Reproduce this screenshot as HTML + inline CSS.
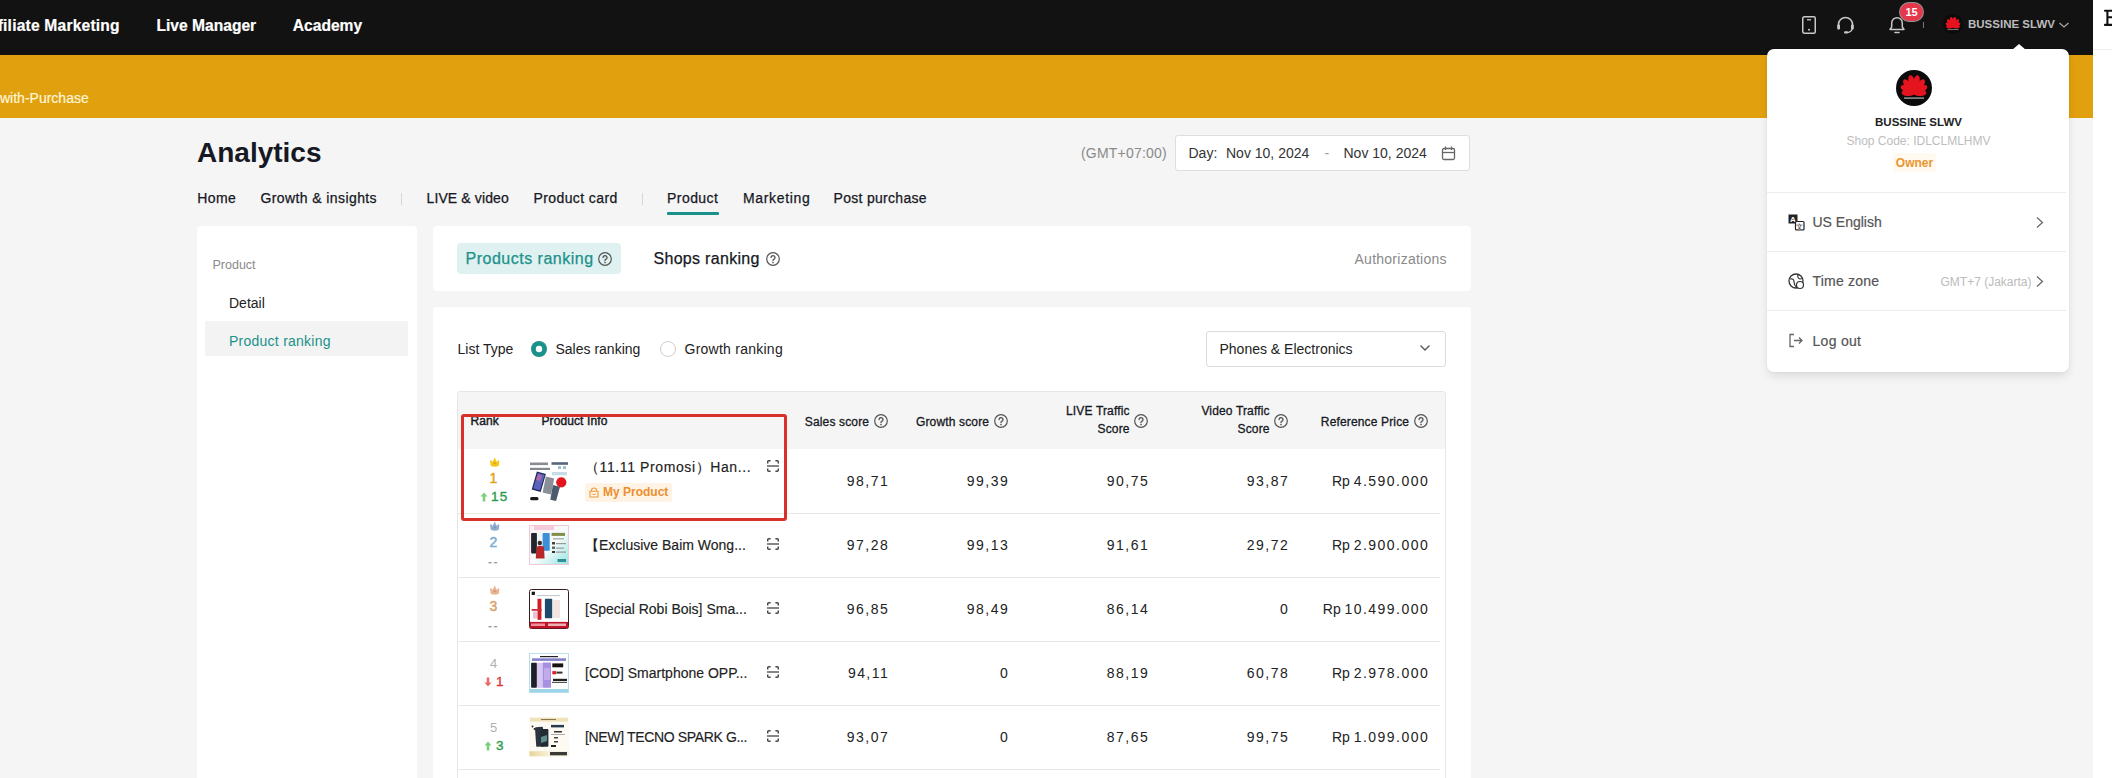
<!DOCTYPE html>
<html><head><meta charset="utf-8"><title>Analytics</title>
<style>
html,body{margin:0;padding:0;}
body{width:2112px;height:778px;overflow:hidden;position:relative;background:#f5f5f5;font-family:"Liberation Sans", sans-serif;}
</style></head><body>
<div style="position:absolute;left:0px;top:0px;width:2093px;height:55px;background:#121212;"></div>
<div style="position:absolute;left:0px;top:55px;width:2093px;height:63px;background:#e1a00e;"></div>
<div style="position:absolute;left:2093px;top:0px;width:19px;height:778px;background:#ffffff;"></div>
<div style="position:absolute;left:2093px;top:49px;width:19px;height:1px;background:#eeeeee;"></div>
<svg style="position:absolute;left:2103px;top:8px;" width="9" height="20" viewBox="0 0 9 20"><path d="M2 2.8 H9 M2 16.9 H9 M4.4 2.8 V16.9 M4.4 9.3 H9" fill="none" stroke="#111" stroke-width="2.1" stroke-linecap="round"/></svg>
<div style="position:absolute;top:17.79px;font-size:15.6px;line-height:15.6px;color:#fff;font-weight:700;white-space:nowrap;font-family:'Liberation Sans', sans-serif;right:1992.40px;letter-spacing:0.2px;margin-right:-0.2px;-webkit-text-stroke:0.2px currentColor;">Affiliate Marketing</div>
<div style="position:absolute;top:17.79px;font-size:15.6px;line-height:15.6px;color:#fff;font-weight:700;white-space:nowrap;font-family:'Liberation Sans', sans-serif;left:156.50px;-webkit-text-stroke:0.2px currentColor;">Live Manager</div>
<div style="position:absolute;top:17.79px;font-size:15.6px;line-height:15.6px;color:#fff;font-weight:700;white-space:nowrap;font-family:'Liberation Sans', sans-serif;left:292.80px;-webkit-text-stroke:0.2px currentColor;">Academy</div>
<div style="position:absolute;top:91.15px;font-size:14px;line-height:14px;color:#fff6d8;font-weight:400;white-space:nowrap;font-family:'Liberation Sans', sans-serif;left:0.00px;-webkit-text-stroke:0.2px currentColor;">with-Purchase</div>
<svg style="position:absolute;left:1801px;top:15px;" width="16" height="20" viewBox="0 0 16 20"><rect x="1.75" y="1.75" width="12.5" height="16.5" rx="1.5" fill="none" stroke="#c8c8c8" stroke-width="1.5"/><line x1="6" y1="4.8" x2="10" y2="4.8" stroke="#c8c8c8" stroke-width="1.3"/><circle cx="8" cy="14.8" r="1" fill="#c8c8c8"/></svg>
<svg style="position:absolute;left:1836px;top:15px;" width="19" height="20" viewBox="0 0 19 20"><path d="M2.5 11 V9.5 A7 7 0 0 1 16.5 9.5 V11" fill="none" stroke="#c8c8c8" stroke-width="1.6"/><rect x="1.2" y="9.5" width="2.8" height="5" rx="1" fill="#c8c8c8"/><rect x="15" y="9.5" width="2.8" height="5" rx="1" fill="#c8c8c8"/><path d="M16 14 Q15.5 17.5 10 17.5" fill="none" stroke="#c8c8c8" stroke-width="1.5"/><rect x="8" y="16.3" width="4" height="2.3" rx="1" fill="#c8c8c8"/></svg>
<svg style="position:absolute;left:1888px;top:15px;" width="18" height="20" viewBox="0 0 18 20"><path d="M2 14.5 H16 L14.3 12 V8 A5.3 5.3 0 0 0 3.7 8 V12 Z" fill="none" stroke="#c8c8c8" stroke-width="1.5" stroke-linejoin="round"/><path d="M7 17.5 H11" stroke="#c8c8c8" stroke-width="1.6" stroke-linecap="round"/></svg>
<div style="position:absolute;left:1900px;top:3px;width:23px;height:18px;background:#e5384c;border-radius:9px;box-shadow:0 0 0 1px rgba(255,255,255,0.55);"></div>
<div style="position:absolute;top:7.19px;font-size:11px;line-height:11px;color:#fff;font-weight:700;white-space:nowrap;font-family:'Liberation Sans', sans-serif;left:1911.50px;transform:translateX(-50%);">15</div>
<div style="position:absolute;left:1923px;top:22px;width:1px;height:6px;background:#777;"></div>
<svg style="position:absolute;left:1942.5px;top:14.3px;" width="20" height="20" viewBox="0 0 20 20"><g transform="scale(0.5555555555555556)"><circle cx="18" cy="18" r="18" fill="#0b0b0b"/><path d="M0 0 C -4.3 -6.824999999999999 -4.085 -19.5 0 -19.5 C 4.085 -19.5 4.3 -6.824999999999999 0 0 Z" fill="#e5141e" transform="translate(18 24.5) rotate(-11)"/><path d="M0 0 C -4.3 -6.824999999999999 -4.085 -19.5 0 -19.5 C 4.085 -19.5 4.3 -6.824999999999999 0 0 Z" fill="#e5141e" transform="translate(18 24.5) rotate(11)"/><path d="M0 0 C -4.3 -6.3 -4.085 -18 0 -18 C 4.085 -18 4.3 -6.3 0 0 Z" fill="#e5141e" transform="translate(18 24.5) rotate(-34)"/><path d="M0 0 C -4.3 -6.3 -4.085 -18 0 -18 C 4.085 -18 4.3 -6.3 0 0 Z" fill="#e5141e" transform="translate(18 24.5) rotate(34)"/><path d="M0 0 C -4.0 -5.425 -3.8 -15.5 0 -15.5 C 3.8 -15.5 4.0 -5.425 0 0 Z" fill="#e5141e" transform="translate(18 24.5) rotate(-57)"/><path d="M0 0 C -4.0 -5.425 -3.8 -15.5 0 -15.5 C 3.8 -15.5 4.0 -5.425 0 0 Z" fill="#e5141e" transform="translate(18 24.5) rotate(57)"/><path d="M0 0 C -3.6 -4.375 -3.42 -12.5 0 -12.5 C 3.42 -12.5 3.6 -4.375 0 0 Z" fill="#e5141e" transform="translate(18 24.5) rotate(-81)"/><path d="M0 0 C -3.6 -4.375 -3.42 -12.5 0 -12.5 C 3.42 -12.5 3.6 -4.375 0 0 Z" fill="#e5141e" transform="translate(18 24.5) rotate(81)"/><rect x="8" y="27.3" width="20" height="1.6" fill="#8a8a8a"/></g></svg>
<div style="position:absolute;top:19.27px;font-size:11.5px;line-height:11.5px;color:#bdbdbd;font-weight:700;white-space:nowrap;font-family:'Liberation Sans', sans-serif;left:1968.00px;">BUSSINE SLWV</div>
<svg style="position:absolute;left:2058px;top:21px;" width="12" height="8" viewBox="0 0 12 8"><path d="M1.5 2 L6 6 L10.5 2" fill="none" stroke="#aaa" stroke-width="1.2"/></svg>
<div style="position:absolute;top:138.60px;font-size:28px;line-height:28px;color:#161823;font-weight:700;white-space:nowrap;font-family:'Liberation Sans', sans-serif;left:197.00px;">Analytics</div>
<div style="position:absolute;top:146.15px;font-size:14px;line-height:14px;color:#8a8a8a;font-weight:400;white-space:nowrap;font-family:'Liberation Sans', sans-serif;left:1081.00px;letter-spacing:0.2px;">(GMT+07:00)</div>
<div style="position:absolute;left:1175px;top:135px;width:295px;height:36px;background:#fff;border:1px solid #dedede;border-radius:3px;box-sizing:border-box;"></div>
<div style="position:absolute;top:146.15px;font-size:14px;line-height:14px;color:#333;font-weight:400;white-space:nowrap;font-family:'Liberation Sans', sans-serif;left:1188.50px;">Day:</div>
<div style="position:absolute;top:146.15px;font-size:14px;line-height:14px;color:#333;font-weight:400;white-space:nowrap;font-family:'Liberation Sans', sans-serif;left:1226.00px;">Nov 10, 2024</div>
<div style="position:absolute;top:146.15px;font-size:14px;line-height:14px;color:#999;font-weight:400;white-space:nowrap;font-family:'Liberation Sans', sans-serif;left:1324.50px;">-</div>
<div style="position:absolute;top:146.15px;font-size:14px;line-height:14px;color:#333;font-weight:400;white-space:nowrap;font-family:'Liberation Sans', sans-serif;left:1343.50px;">Nov 10, 2024</div>
<svg style="position:absolute;left:1441px;top:146px;" width="16" height="15" viewBox="0 0 16 15"><rect x="1.5" y="2.5" width="12" height="11" rx="1.5" fill="none" stroke="#666" stroke-width="1.3"/><line x1="1.5" y1="6.5" x2="13.5" y2="6.5" stroke="#666" stroke-width="1.3"/><line x1="4.5" y1="0.5" x2="4.5" y2="4" stroke="#666" stroke-width="1.3"/><line x1="10.5" y1="0.5" x2="10.5" y2="4" stroke="#666" stroke-width="1.3"/></svg>
<div style="position:absolute;top:191.25px;font-size:14px;line-height:14px;color:#161823;font-weight:400;white-space:nowrap;font-family:'Liberation Sans', sans-serif;left:197.30px;-webkit-text-stroke:0.25px currentColor;letter-spacing:0.4px;">Home</div>
<div style="position:absolute;top:191.25px;font-size:14px;line-height:14px;color:#161823;font-weight:400;white-space:nowrap;font-family:'Liberation Sans', sans-serif;left:260.50px;-webkit-text-stroke:0.25px currentColor;letter-spacing:0.4px;">Growth &amp; insights</div>
<div style="position:absolute;top:191.25px;font-size:14px;line-height:14px;color:#161823;font-weight:400;white-space:nowrap;font-family:'Liberation Sans', sans-serif;left:426.50px;-webkit-text-stroke:0.25px currentColor;letter-spacing:0.12px;">LIVE &amp; video</div>
<div style="position:absolute;top:191.25px;font-size:14px;line-height:14px;color:#161823;font-weight:400;white-space:nowrap;font-family:'Liberation Sans', sans-serif;left:533.50px;-webkit-text-stroke:0.25px currentColor;letter-spacing:0.4px;">Product card</div>
<div style="position:absolute;top:191.25px;font-size:14px;line-height:14px;color:#161823;font-weight:400;white-space:nowrap;font-family:'Liberation Sans', sans-serif;left:667.00px;-webkit-text-stroke:0.25px currentColor;letter-spacing:0.45px;">Product</div>
<div style="position:absolute;top:191.25px;font-size:14px;line-height:14px;color:#161823;font-weight:400;white-space:nowrap;font-family:'Liberation Sans', sans-serif;left:743.00px;-webkit-text-stroke:0.25px currentColor;letter-spacing:0.65px;">Marketing</div>
<div style="position:absolute;top:191.25px;font-size:14px;line-height:14px;color:#161823;font-weight:400;white-space:nowrap;font-family:'Liberation Sans', sans-serif;left:833.50px;-webkit-text-stroke:0.25px currentColor;letter-spacing:0.3px;">Post purchase</div>
<div style="position:absolute;left:401px;top:193px;width:1px;height:12px;background:#d6d6d6;"></div>
<div style="position:absolute;left:642px;top:193px;width:1px;height:12px;background:#d6d6d6;"></div>
<div style="position:absolute;left:667px;top:212px;width:52px;height:3px;background:#1b918b;border-radius:1px;"></div>
<div style="position:absolute;left:197px;top:226px;width:220px;height:552px;background:#fff;border-radius:4px 4px 0 0;"></div>
<div style="position:absolute;top:259.42px;font-size:12.5px;line-height:12.5px;color:#8a8a8a;font-weight:400;white-space:nowrap;font-family:'Liberation Sans', sans-serif;left:212.50px;">Product</div>
<div style="position:absolute;top:295.85px;font-size:14px;line-height:14px;color:#222;font-weight:400;white-space:nowrap;font-family:'Liberation Sans', sans-serif;left:229.00px;">Detail</div>
<div style="position:absolute;left:205px;top:321px;width:203px;height:35px;background:#f3f3f3;border-radius:2px;"></div>
<div style="position:absolute;top:333.85px;font-size:14px;line-height:14px;color:#1b918b;font-weight:400;white-space:nowrap;font-family:'Liberation Sans', sans-serif;left:229.00px;letter-spacing:0.25px;">Product ranking</div>
<div style="position:absolute;left:433px;top:226px;width:1038px;height:65px;background:#fff;border-radius:4px;"></div>
<div style="position:absolute;left:457px;top:243px;width:164px;height:31px;background:#dff1f0;border-radius:4px;"></div>
<div style="position:absolute;top:251.46px;font-size:16px;line-height:16px;color:#1b918b;font-weight:400;white-space:nowrap;font-family:'Liberation Sans', sans-serif;left:465.50px;-webkit-text-stroke:0.25px currentColor;letter-spacing:0.5px;">Products ranking</div>
<svg style="position:absolute;left:598px;top:252px;" width="14" height="14" viewBox="0 0 14 14"><circle cx="7" cy="7" r="6.3" fill="none" stroke="#555" stroke-width="1.2"/><path d="M5.1 5.6 A1.95 1.95 0 1 1 8.1 7.2 Q7 7.7 7 8.6" fill="none" stroke="#555" stroke-width="1.35" stroke-linecap="round"/><circle cx="7" cy="10.5" r="0.85" fill="#555"/></svg>
<div style="position:absolute;top:251.46px;font-size:16px;line-height:16px;color:#161823;font-weight:400;white-space:nowrap;font-family:'Liberation Sans', sans-serif;left:653.50px;-webkit-text-stroke:0.25px currentColor;letter-spacing:0.3px;">Shops ranking</div>
<svg style="position:absolute;left:766px;top:252px;" width="14" height="14" viewBox="0 0 14 14"><circle cx="7" cy="7" r="6.3" fill="none" stroke="#555" stroke-width="1.2"/><path d="M5.1 5.6 A1.95 1.95 0 1 1 8.1 7.2 Q7 7.7 7 8.6" fill="none" stroke="#555" stroke-width="1.35" stroke-linecap="round"/><circle cx="7" cy="10.5" r="0.85" fill="#555"/></svg>
<div style="position:absolute;top:252.15px;font-size:14px;line-height:14px;color:#8a8a8a;font-weight:400;white-space:nowrap;font-family:'Liberation Sans', sans-serif;right:665.50px;letter-spacing:0.25px;margin-right:-0.25px;">Authorizations</div>
<div style="position:absolute;left:433px;top:307px;width:1038px;height:471px;background:#fff;border-radius:4px 4px 0 0;"></div>
<div style="position:absolute;top:342.15px;font-size:14px;line-height:14px;color:#222;font-weight:400;white-space:nowrap;font-family:'Liberation Sans', sans-serif;left:457.50px;">List Type</div>
<svg style="position:absolute;left:531px;top:341px;" width="16" height="16" viewBox="0 0 16 16"><circle cx="8" cy="8" r="8" fill="#1b918b"/><circle cx="8" cy="8" r="3.2" fill="#fff"/></svg>
<div style="position:absolute;top:342.15px;font-size:14px;line-height:14px;color:#222;font-weight:400;white-space:nowrap;font-family:'Liberation Sans', sans-serif;left:555.50px;">Sales ranking</div>
<svg style="position:absolute;left:660px;top:341px;" width="16" height="16" viewBox="0 0 16 16"><circle cx="8" cy="8" r="7.5" fill="#fff" stroke="#cfcfcf" stroke-width="1"/></svg>
<div style="position:absolute;top:342.15px;font-size:14px;line-height:14px;color:#222;font-weight:400;white-space:nowrap;font-family:'Liberation Sans', sans-serif;left:684.50px;letter-spacing:0.25px;">Growth ranking</div>
<div style="position:absolute;left:1206px;top:331px;width:240px;height:36px;background:#fff;border:1px solid #dcdcdc;border-radius:3px;box-sizing:border-box;"></div>
<div style="position:absolute;top:341.85px;font-size:14px;line-height:14px;color:#222;font-weight:400;white-space:nowrap;font-family:'Liberation Sans', sans-serif;left:1219.50px;">Phones &amp; Electronics</div>
<svg style="position:absolute;left:1419px;top:344px;" width="12" height="8" viewBox="0 0 12 8"><path d="M1.5 1.5 L6 6 L10.5 1.5" fill="none" stroke="#555" stroke-width="1.3"/></svg>
<div style="position:absolute;left:457px;top:391px;width:989px;height:387px;border:1px solid #e6e6e6;border-bottom:none;border-radius:4px 4px 0 0;box-sizing:border-box;"></div>
<div style="position:absolute;left:458px;top:392px;width:987px;height:57px;background:#f5f5f5;border-radius:3px 3px 0 0;"></div>
<div style="position:absolute;top:414.64px;font-size:12px;line-height:12px;color:#161823;font-weight:400;white-space:nowrap;font-family:'Liberation Sans', sans-serif;left:470.50px;-webkit-text-stroke:0.4px currentColor;letter-spacing:0.1px;">Rank</div>
<div style="position:absolute;top:414.64px;font-size:12px;line-height:12px;color:#161823;font-weight:400;white-space:nowrap;font-family:'Liberation Sans', sans-serif;left:541.50px;-webkit-text-stroke:0.4px currentColor;letter-spacing:0.1px;">Product Info</div>
<div style="position:absolute;top:415.54px;font-size:12px;line-height:12px;color:#161823;font-weight:400;white-space:nowrap;font-family:'Liberation Sans', sans-serif;right:1243.00px;-webkit-text-stroke:0.3px currentColor;letter-spacing:0.15px;margin-right:-0.15px;">Sales score</div>
<svg style="position:absolute;left:874px;top:414px;" width="14" height="14" viewBox="0 0 14 14"><circle cx="7" cy="7" r="6.3" fill="none" stroke="#555" stroke-width="1.2"/><path d="M5.1 5.6 A1.95 1.95 0 1 1 8.1 7.2 Q7 7.7 7 8.6" fill="none" stroke="#555" stroke-width="1.35" stroke-linecap="round"/><circle cx="7" cy="10.5" r="0.85" fill="#555"/></svg>
<div style="position:absolute;top:415.54px;font-size:12px;line-height:12px;color:#161823;font-weight:400;white-space:nowrap;font-family:'Liberation Sans', sans-serif;right:1123.00px;-webkit-text-stroke:0.3px currentColor;letter-spacing:0.15px;margin-right:-0.15px;">Growth score</div>
<svg style="position:absolute;left:994px;top:414px;" width="14" height="14" viewBox="0 0 14 14"><circle cx="7" cy="7" r="6.3" fill="none" stroke="#555" stroke-width="1.2"/><path d="M5.1 5.6 A1.95 1.95 0 1 1 8.1 7.2 Q7 7.7 7 8.6" fill="none" stroke="#555" stroke-width="1.35" stroke-linecap="round"/><circle cx="7" cy="10.5" r="0.85" fill="#555"/></svg>
<div style="position:absolute;top:404.74px;font-size:12px;line-height:12px;color:#161823;font-weight:400;white-space:nowrap;font-family:'Liberation Sans', sans-serif;right:982.50px;-webkit-text-stroke:0.3px currentColor;letter-spacing:0.15px;margin-right:-0.15px;">LIVE Traffic</div>
<div style="position:absolute;top:422.74px;font-size:12px;line-height:12px;color:#161823;font-weight:400;white-space:nowrap;font-family:'Liberation Sans', sans-serif;right:982.50px;-webkit-text-stroke:0.3px currentColor;letter-spacing:0.15px;margin-right:-0.15px;">Score</div>
<svg style="position:absolute;left:1134px;top:414px;" width="14" height="14" viewBox="0 0 14 14"><circle cx="7" cy="7" r="6.3" fill="none" stroke="#555" stroke-width="1.2"/><path d="M5.1 5.6 A1.95 1.95 0 1 1 8.1 7.2 Q7 7.7 7 8.6" fill="none" stroke="#555" stroke-width="1.35" stroke-linecap="round"/><circle cx="7" cy="10.5" r="0.85" fill="#555"/></svg>
<div style="position:absolute;top:404.74px;font-size:12px;line-height:12px;color:#161823;font-weight:400;white-space:nowrap;font-family:'Liberation Sans', sans-serif;right:842.50px;-webkit-text-stroke:0.3px currentColor;letter-spacing:0.15px;margin-right:-0.15px;">Video Traffic</div>
<div style="position:absolute;top:422.74px;font-size:12px;line-height:12px;color:#161823;font-weight:400;white-space:nowrap;font-family:'Liberation Sans', sans-serif;right:842.50px;-webkit-text-stroke:0.3px currentColor;letter-spacing:0.15px;margin-right:-0.15px;">Score</div>
<svg style="position:absolute;left:1274px;top:414px;" width="14" height="14" viewBox="0 0 14 14"><circle cx="7" cy="7" r="6.3" fill="none" stroke="#555" stroke-width="1.2"/><path d="M5.1 5.6 A1.95 1.95 0 1 1 8.1 7.2 Q7 7.7 7 8.6" fill="none" stroke="#555" stroke-width="1.35" stroke-linecap="round"/><circle cx="7" cy="10.5" r="0.85" fill="#555"/></svg>
<div style="position:absolute;top:415.54px;font-size:12px;line-height:12px;color:#161823;font-weight:400;white-space:nowrap;font-family:'Liberation Sans', sans-serif;right:703.00px;-webkit-text-stroke:0.3px currentColor;letter-spacing:0.15px;margin-right:-0.15px;">Reference Price</div>
<svg style="position:absolute;left:1414px;top:414px;" width="14" height="14" viewBox="0 0 14 14"><circle cx="7" cy="7" r="6.3" fill="none" stroke="#555" stroke-width="1.2"/><path d="M5.1 5.6 A1.95 1.95 0 1 1 8.1 7.2 Q7 7.7 7 8.6" fill="none" stroke="#555" stroke-width="1.35" stroke-linecap="round"/><circle cx="7" cy="10.5" r="0.85" fill="#555"/></svg>
<div style="position:absolute;left:458px;top:513px;width:982px;height:1px;background:#e8e8e8;"></div>
<svg style="position:absolute;left:488.5px;top:457px;" width="12" height="11" viewBox="0 0 12 11"><g transform="scale(0.88)"><path d="M2 4.5 L4.3 6.8 L6.5 2.8 L8.7 6.8 L11 4.5 L10.3 9.6 Q6.5 11 2.7 9.6 Z" fill="#f5c518" stroke="#f5c518" stroke-width="1.6" stroke-linejoin="round"/><circle cx="6.5" cy="1.5" r="0.9" fill="#f5c518" opacity="0.7"/><circle cx="6.5" cy="7.3" r="1.3" fill="#000" opacity="0.15"/></g></svg>
<div style="position:absolute;top:470.65px;font-size:14px;line-height:14px;color:#e3a21a;font-weight:400;white-space:nowrap;font-family:'Liberation Sans', sans-serif;left:493.50px;transform:translateX(-50%);-webkit-text-stroke:0.45px currentColor;">1</div>
<svg style="position:absolute;left:479.5px;top:492.1px;" width="8" height="10" viewBox="0 0 8 10"><path d="M4 0.5 L7.5 4.5 H5.3 V9.5 H2.7 V4.5 H0.5 Z" fill="#7ccd7e"/></svg>
<div style="position:absolute;top:490.17px;font-size:13.5px;line-height:13.5px;color:#2a9a4a;font-weight:400;white-space:nowrap;font-family:'Liberation Sans', sans-serif;left:491.00px;letter-spacing:1.2px;-webkit-text-stroke:0.35px currentColor;">15</div>
<svg style="position:absolute;left:529px;top:461px;" width="40" height="40" viewBox="0 0 40 40"><rect width="40" height="40" fill="#ffffff"/><rect x="1" y="1.5" width="18" height="2.6" fill="#6b7078" opacity="0.8"/><rect x="1" y="6.8" width="20" height="2.2" fill="#5a6068" opacity="0.75"/><rect x="22.5" y="1.2" width="16.5" height="2.6" fill="#3d4a66" opacity="0.85"/><rect x="29" y="5.3" width="3" height="2.6" fill="#8fb8c8"/><rect x="34" y="5.3" width="3" height="2.6" fill="#8fb8c8"/><rect x="23" y="11" width="15" height="3.3" fill="#b8d4e0" opacity="0.8"/><polygon points="7.9,10.4 16.9,13 11.7,31 2.7,28.4" fill="#1c2a5a"/><polygon points="8.8,12 15.6,14 11,29.3 4.2,27.4" fill="#5b64b8"/><polygon points="9,13 13,14.5 11,20 7,19" fill="#c06aa8" opacity="0.8"/><polygon points="16.9,15.6 25.2,17.5 22,33.6 13.6,31.6" fill="#8a8e96"/><polygon points="23.9,23.9 31,25.8 27.1,40 21.3,38.7" fill="#4c5a6c"/><circle cx="32.3" cy="21.3" r="5.1" fill="#e3141c"/><rect x="1.1" y="36" width="8.4" height="3.3" rx="1.6" fill="#1a1a1a"/></svg>
<div style="position:absolute;top:460.35px;font-size:14px;line-height:14px;color:#222;font-weight:400;white-space:nowrap;font-family:'Liberation Sans', sans-serif;left:593.00px;letter-spacing:0.6px;margin-left:-8px;-webkit-text-stroke:0.15px currentColor;">（11.11 Promosi）Han...</div>
<div style="position:absolute;left:585px;top:483px;width:87px;height:19px;background:#fff3e6;border-radius:2px;"></div>
<svg style="position:absolute;left:588.5px;top:487px;" width="10" height="11" viewBox="0 0 10 11"><path d="M2.5 4 V3.5 A2.5 2.5 0 0 1 7.5 3.5 V4 M1 4.2 H9 V10 H1 Z" fill="none" stroke="#ee9a3a" stroke-width="1.1"/><path d="M3.5 7 Q5 8.5 6.5 7" fill="none" stroke="#ee9a3a" stroke-width="1"/></svg>
<div style="position:absolute;top:486.44px;font-size:12px;line-height:12px;color:#ec8f2c;font-weight:700;white-space:nowrap;font-family:'Liberation Sans', sans-serif;left:603.00px;">My Product</div>
<svg style="position:absolute;left:766px;top:459px;" width="14" height="14" viewBox="0 0 14 14"><path d="M1.7 4.6 V2.8 Q1.7 1.7 2.8 1.7 H4.6 M9.4 1.7 H11.2 Q12.3 1.7 12.3 2.8 V4.6 M12.3 9.4 V11.2 Q12.3 12.3 11.2 12.3 H9.4 M4.6 12.3 H2.8 Q1.7 12.3 1.7 11.2 V9.4" fill="none" stroke="#444" stroke-width="1.4"/><line x1="1" y1="7" x2="13" y2="7" stroke="#444" stroke-width="1.3"/></svg>
<div style="position:absolute;top:474.15px;font-size:14px;line-height:14px;color:#222;font-weight:400;white-space:nowrap;font-family:'Liberation Sans', sans-serif;right:1224.30px;letter-spacing:1.45px;margin-right:-1.45px;">98,71</div>
<div style="position:absolute;top:474.15px;font-size:14px;line-height:14px;color:#222;font-weight:400;white-space:nowrap;font-family:'Liberation Sans', sans-serif;right:1104.30px;letter-spacing:1.45px;margin-right:-1.45px;">99,39</div>
<div style="position:absolute;top:474.15px;font-size:14px;line-height:14px;color:#222;font-weight:400;white-space:nowrap;font-family:'Liberation Sans', sans-serif;right:964.30px;letter-spacing:1.45px;margin-right:-1.45px;">90,75</div>
<div style="position:absolute;top:474.15px;font-size:14px;line-height:14px;color:#222;font-weight:400;white-space:nowrap;font-family:'Liberation Sans', sans-serif;right:824.30px;letter-spacing:1.45px;margin-right:-1.45px;">93,87</div>
<div style="position:absolute;top:474.15px;font-size:14px;line-height:14px;color:#222;font-weight:400;white-space:nowrap;font-family:'Liberation Sans', sans-serif;right:684.30px;letter-spacing:1.45px;margin-right:-1.45px;"><span style="letter-spacing:0">Rp </span>4.590.000</div>
<div style="position:absolute;left:458px;top:577px;width:982px;height:1px;background:#e8e8e8;"></div>
<svg style="position:absolute;left:488.5px;top:521px;" width="12" height="11" viewBox="0 0 12 11"><g transform="scale(0.88)"><path d="M2 4.5 L4.3 6.8 L6.5 2.8 L8.7 6.8 L11 4.5 L10.3 9.6 Q6.5 11 2.7 9.6 Z" fill="#94acd0" stroke="#94acd0" stroke-width="1.6" stroke-linejoin="round"/><circle cx="6.5" cy="1.5" r="0.9" fill="#94acd0" opacity="0.7"/><circle cx="6.5" cy="7.3" r="1.3" fill="#000" opacity="0.15"/></g></svg>
<div style="position:absolute;top:534.65px;font-size:14px;line-height:14px;color:#79acd2;font-weight:400;white-space:nowrap;font-family:'Liberation Sans', sans-serif;left:493.50px;transform:translateX(-50%);-webkit-text-stroke:0.45px currentColor;">2</div>
<div style="position:absolute;top:555.84px;font-size:12px;line-height:12px;color:#9a9a9a;font-weight:400;white-space:nowrap;font-family:'Liberation Sans', sans-serif;left:493.50px;transform:translateX(-50%);letter-spacing:1.5px;-webkit-text-stroke:0.2px currentColor;">--</div>
<svg style="position:absolute;left:529px;top:525px;" width="40" height="40" viewBox="0 0 40 40"><defs><linearGradient id="g1" x1="0" y1="0" x2="1" y2="1"><stop offset="0" stop-color="#fbeff3"/><stop offset="0.55" stop-color="#f4fbfb"/><stop offset="1" stop-color="#8fe3df"/></linearGradient></defs><rect width="40" height="40" fill="url(#g1)"/><rect x="0.5" y="0.5" width="39" height="39" fill="none" stroke="#f0c8d8" stroke-width="1"/><rect x="5" y="1" width="20" height="4" fill="#f3b8cf" opacity="0.7"/><rect x="2.1" y="7.9" width="5.8" height="20.5" rx="0.8" fill="#22252e"/><rect x="8" y="7.9" width="5" height="18" fill="#eef4f8"/><rect x="13.6" y="7.9" width="7.1" height="17.9" rx="0.8" fill="#3d8fd8"/><circle cx="10.8" cy="18" r="2.2" fill="#3a2a22"/><path d="M6.8 33.6 L7.5 22 Q11 19.5 15 22 L15.6 33.6 Z" fill="#b8262a"/><rect x="22.6" y="7.9" width="13.4" height="3" fill="#6f7a2a" opacity="0.85"/><rect x="24" y="13" width="11" height="1.5" fill="#8a8a70" opacity="0.6"/><rect x="23" y="17" width="3" height="2.5" fill="#444"/><rect x="27" y="18" width="10" height="1.2" fill="#999"/><rect x="23" y="21.5" width="3" height="2.5" fill="#666"/><rect x="27" y="22.5" width="8" height="1.2" fill="#999"/><rect x="23" y="26" width="3" height="2" fill="#333"/><rect x="27" y="26.5" width="10" height="1.2" fill="#999"/><rect x="28.5" y="34" width="8.5" height="3" fill="#1e7a8a" opacity="0.85"/></svg>
<div style="position:absolute;top:537.65px;font-size:14px;line-height:14px;color:#222;font-weight:400;white-space:nowrap;font-family:'Liberation Sans', sans-serif;left:585.00px;-webkit-text-stroke:0.15px currentColor;">【Exclusive Baim Wong...</div>
<svg style="position:absolute;left:766px;top:537px;" width="14" height="14" viewBox="0 0 14 14"><path d="M1.7 4.6 V2.8 Q1.7 1.7 2.8 1.7 H4.6 M9.4 1.7 H11.2 Q12.3 1.7 12.3 2.8 V4.6 M12.3 9.4 V11.2 Q12.3 12.3 11.2 12.3 H9.4 M4.6 12.3 H2.8 Q1.7 12.3 1.7 11.2 V9.4" fill="none" stroke="#444" stroke-width="1.4"/><line x1="1" y1="7" x2="13" y2="7" stroke="#444" stroke-width="1.3"/></svg>
<div style="position:absolute;top:538.15px;font-size:14px;line-height:14px;color:#222;font-weight:400;white-space:nowrap;font-family:'Liberation Sans', sans-serif;right:1224.30px;letter-spacing:1.45px;margin-right:-1.45px;">97,28</div>
<div style="position:absolute;top:538.15px;font-size:14px;line-height:14px;color:#222;font-weight:400;white-space:nowrap;font-family:'Liberation Sans', sans-serif;right:1104.30px;letter-spacing:1.45px;margin-right:-1.45px;">99,13</div>
<div style="position:absolute;top:538.15px;font-size:14px;line-height:14px;color:#222;font-weight:400;white-space:nowrap;font-family:'Liberation Sans', sans-serif;right:964.30px;letter-spacing:1.45px;margin-right:-1.45px;">91,61</div>
<div style="position:absolute;top:538.15px;font-size:14px;line-height:14px;color:#222;font-weight:400;white-space:nowrap;font-family:'Liberation Sans', sans-serif;right:824.30px;letter-spacing:1.45px;margin-right:-1.45px;">29,72</div>
<div style="position:absolute;top:538.15px;font-size:14px;line-height:14px;color:#222;font-weight:400;white-space:nowrap;font-family:'Liberation Sans', sans-serif;right:684.30px;letter-spacing:1.45px;margin-right:-1.45px;"><span style="letter-spacing:0">Rp </span>2.900.000</div>
<div style="position:absolute;left:458px;top:641px;width:982px;height:1px;background:#e8e8e8;"></div>
<svg style="position:absolute;left:488.5px;top:585px;" width="12" height="11" viewBox="0 0 12 11"><g transform="scale(0.88)"><path d="M2 4.5 L4.3 6.8 L6.5 2.8 L8.7 6.8 L11 4.5 L10.3 9.6 Q6.5 11 2.7 9.6 Z" fill="#e9b48e" stroke="#e9b48e" stroke-width="1.6" stroke-linejoin="round"/><circle cx="6.5" cy="1.5" r="0.9" fill="#e9b48e" opacity="0.7"/><circle cx="6.5" cy="7.3" r="1.3" fill="#000" opacity="0.15"/></g></svg>
<div style="position:absolute;top:598.65px;font-size:14px;line-height:14px;color:#d9a070;font-weight:400;white-space:nowrap;font-family:'Liberation Sans', sans-serif;left:493.50px;transform:translateX(-50%);-webkit-text-stroke:0.45px currentColor;">3</div>
<div style="position:absolute;top:619.84px;font-size:12px;line-height:12px;color:#9a9a9a;font-weight:400;white-space:nowrap;font-family:'Liberation Sans', sans-serif;left:493.50px;transform:translateX(-50%);letter-spacing:1.5px;-webkit-text-stroke:0.2px currentColor;">--</div>
<svg style="position:absolute;left:529px;top:589px;" width="40" height="40" viewBox="0 0 40 40"><rect width="40" height="40" fill="#ffffff"/><rect x="0.5" y="0.5" width="39" height="39" rx="2" fill="none" stroke="#3a1c1c" stroke-width="1"/><rect x="2.7" y="2.7" width="3.2" height="3.2" fill="#111"/><rect x="8" y="6.2" width="23" height="0.9" fill="#bbb"/><rect x="8.5" y="9.8" width="3.9" height="21" fill="#d01a24"/><rect x="2.7" y="20" width="10" height="1.8" fill="#c83040"/><rect x="4" y="22.5" width="4" height="7" fill="#e8b0c8" opacity="0.8"/><rect x="15.9" y="9.8" width="7.4" height="19.5" rx="1" fill="#1d4a6a"/><rect x="23.5" y="11" width="7.5" height="18" fill="#f2e4e0"/><rect x="0.8" y="32.9" width="38.4" height="6.4" fill="#c0142a"/><rect x="2" y="34.5" width="14" height="2.5" fill="#ffb0b8" opacity="0.8"/><rect x="19" y="34.5" width="18" height="2.5" fill="#f8d8dc" opacity="0.8"/></svg>
<div style="position:absolute;top:601.65px;font-size:14px;line-height:14px;color:#222;font-weight:400;white-space:nowrap;font-family:'Liberation Sans', sans-serif;left:585.00px;-webkit-text-stroke:0.15px currentColor;">[Special Robi Bois] Sma...</div>
<svg style="position:absolute;left:766px;top:601px;" width="14" height="14" viewBox="0 0 14 14"><path d="M1.7 4.6 V2.8 Q1.7 1.7 2.8 1.7 H4.6 M9.4 1.7 H11.2 Q12.3 1.7 12.3 2.8 V4.6 M12.3 9.4 V11.2 Q12.3 12.3 11.2 12.3 H9.4 M4.6 12.3 H2.8 Q1.7 12.3 1.7 11.2 V9.4" fill="none" stroke="#444" stroke-width="1.4"/><line x1="1" y1="7" x2="13" y2="7" stroke="#444" stroke-width="1.3"/></svg>
<div style="position:absolute;top:602.15px;font-size:14px;line-height:14px;color:#222;font-weight:400;white-space:nowrap;font-family:'Liberation Sans', sans-serif;right:1224.30px;letter-spacing:1.45px;margin-right:-1.45px;">96,85</div>
<div style="position:absolute;top:602.15px;font-size:14px;line-height:14px;color:#222;font-weight:400;white-space:nowrap;font-family:'Liberation Sans', sans-serif;right:1104.30px;letter-spacing:1.45px;margin-right:-1.45px;">98,49</div>
<div style="position:absolute;top:602.15px;font-size:14px;line-height:14px;color:#222;font-weight:400;white-space:nowrap;font-family:'Liberation Sans', sans-serif;right:964.30px;letter-spacing:1.45px;margin-right:-1.45px;">86,14</div>
<div style="position:absolute;top:602.15px;font-size:14px;line-height:14px;color:#222;font-weight:400;white-space:nowrap;font-family:'Liberation Sans', sans-serif;right:824.30px;letter-spacing:1.45px;margin-right:-1.45px;">0</div>
<div style="position:absolute;top:602.15px;font-size:14px;line-height:14px;color:#222;font-weight:400;white-space:nowrap;font-family:'Liberation Sans', sans-serif;right:684.30px;letter-spacing:1.45px;margin-right:-1.45px;"><span style="letter-spacing:0">Rp </span>10.499.000</div>
<div style="position:absolute;left:458px;top:705px;width:982px;height:1px;background:#e8e8e8;"></div>
<div style="position:absolute;top:657.00px;font-size:13px;line-height:13px;color:#b0b0b0;font-weight:400;white-space:nowrap;font-family:'Liberation Sans', sans-serif;left:493.50px;transform:translateX(-50%);">4</div>
<svg style="position:absolute;left:483.5px;top:677.0px;" width="8" height="10" viewBox="0 0 8 10"><path d="M4 9.5 L7.5 5.5 H5.3 V0.5 H2.7 V5.5 H0.5 Z" fill="#ec6a6a"/></svg>
<div style="position:absolute;top:675.07px;font-size:13.5px;line-height:13.5px;color:#d9363e;font-weight:400;white-space:nowrap;font-family:'Liberation Sans', sans-serif;left:496.00px;letter-spacing:1.2px;-webkit-text-stroke:0.35px currentColor;">1</div>
<svg style="position:absolute;left:529px;top:653px;" width="40" height="40" viewBox="0 0 40 40"><rect width="40" height="40" fill="#ffffff"/><rect x="0.5" y="0.3" width="39" height="39" fill="none" stroke="#b8dce8" stroke-width="1.2"/><rect x="11" y="3" width="18" height="1.2" fill="#222"/><rect x="3" y="5.3" width="34" height="2.6" fill="#5a58b8" opacity="0.75"/><rect x="2.1" y="9.8" width="5.8" height="25" rx="0.8" fill="#1d1f2a"/><rect x="7.9" y="9.8" width="5.7" height="25" fill="#d8c8f0"/><rect x="13.6" y="9.5" width="8.4" height="25.3" rx="0.8" fill="#a890e0"/><rect x="15" y="15" width="6" height="12" fill="#c8b0f0" opacity="0.8"/><rect x="23.3" y="10.4" width="10.9" height="3.9" fill="#141414"/><rect x="23.3" y="18.1" width="3.8" height="3.2" fill="#e01e2a"/><rect x="27.5" y="18.6" width="6" height="2" fill="#333"/><rect x="24" y="25.8" width="14" height="2.2" fill="#222"/><rect x="23" y="28.8" width="15" height="1.2" fill="#555"/><rect x="1" y="36" width="38" height="3.3" fill="#9cd4e8"/></svg>
<div style="position:absolute;top:665.65px;font-size:14px;line-height:14px;color:#222;font-weight:400;white-space:nowrap;font-family:'Liberation Sans', sans-serif;left:585.00px;-webkit-text-stroke:0.15px currentColor;">[COD] Smartphone OPP...</div>
<svg style="position:absolute;left:766px;top:665px;" width="14" height="14" viewBox="0 0 14 14"><path d="M1.7 4.6 V2.8 Q1.7 1.7 2.8 1.7 H4.6 M9.4 1.7 H11.2 Q12.3 1.7 12.3 2.8 V4.6 M12.3 9.4 V11.2 Q12.3 12.3 11.2 12.3 H9.4 M4.6 12.3 H2.8 Q1.7 12.3 1.7 11.2 V9.4" fill="none" stroke="#444" stroke-width="1.4"/><line x1="1" y1="7" x2="13" y2="7" stroke="#444" stroke-width="1.3"/></svg>
<div style="position:absolute;top:666.15px;font-size:14px;line-height:14px;color:#222;font-weight:400;white-space:nowrap;font-family:'Liberation Sans', sans-serif;right:1224.30px;letter-spacing:1.45px;margin-right:-1.45px;">94,11</div>
<div style="position:absolute;top:666.15px;font-size:14px;line-height:14px;color:#222;font-weight:400;white-space:nowrap;font-family:'Liberation Sans', sans-serif;right:1104.30px;letter-spacing:1.45px;margin-right:-1.45px;">0</div>
<div style="position:absolute;top:666.15px;font-size:14px;line-height:14px;color:#222;font-weight:400;white-space:nowrap;font-family:'Liberation Sans', sans-serif;right:964.30px;letter-spacing:1.45px;margin-right:-1.45px;">88,19</div>
<div style="position:absolute;top:666.15px;font-size:14px;line-height:14px;color:#222;font-weight:400;white-space:nowrap;font-family:'Liberation Sans', sans-serif;right:824.30px;letter-spacing:1.45px;margin-right:-1.45px;">60,78</div>
<div style="position:absolute;top:666.15px;font-size:14px;line-height:14px;color:#222;font-weight:400;white-space:nowrap;font-family:'Liberation Sans', sans-serif;right:684.30px;letter-spacing:1.45px;margin-right:-1.45px;"><span style="letter-spacing:0">Rp </span>2.978.000</div>
<div style="position:absolute;left:458px;top:769px;width:982px;height:1px;background:#e8e8e8;"></div>
<div style="position:absolute;top:721.00px;font-size:13px;line-height:13px;color:#b0b0b0;font-weight:400;white-space:nowrap;font-family:'Liberation Sans', sans-serif;left:493.50px;transform:translateX(-50%);">5</div>
<svg style="position:absolute;left:483.5px;top:741.0px;" width="8" height="10" viewBox="0 0 8 10"><path d="M4 0.5 L7.5 4.5 H5.3 V9.5 H2.7 V4.5 H0.5 Z" fill="#7ccd7e"/></svg>
<div style="position:absolute;top:739.07px;font-size:13.5px;line-height:13.5px;color:#2a9a4a;font-weight:400;white-space:nowrap;font-family:'Liberation Sans', sans-serif;left:496.00px;letter-spacing:1.2px;-webkit-text-stroke:0.35px currentColor;">3</div>
<svg style="position:absolute;left:529px;top:717px;" width="40" height="40" viewBox="0 0 40 40"><defs><linearGradient id="g5" x1="0" y1="0" x2="1" y2="0"><stop offset="0" stop-color="#e8d49a"/><stop offset="1" stop-color="#f8f0d8"/></linearGradient></defs><rect width="40" height="40" fill="#fcfaf2"/><rect x="1" y="0.8" width="38" height="3.8" fill="#efe2b8"/><rect x="12" y="2" width="15" height="1" fill="#887750"/><circle cx="3.5" cy="9.5" r="0.9" fill="#222"/><circle cx="5.5" cy="12" r="0.9" fill="#222"/><rect x="6.6" y="10" width="8" height="19.7" rx="1" fill="#2c3440" transform="rotate(-4 10 20)"/><rect x="11.5" y="12" width="7.9" height="17.7" rx="1" fill="#222a34"/><polygon points="12,20 18,18 18,24 12,26" fill="#7ab8b0" opacity="0.7"/><rect x="22" y="7.9" width="13" height="2.5" fill="#2a3a50"/><rect x="25" y="14" width="8" height="1.5" fill="#333"/><rect x="22" y="17" width="14" height="0.8" fill="#999"/><rect x="25" y="20" width="4" height="1.5" fill="#444"/><rect x="25" y="24" width="4" height="1.5" fill="#444"/><rect x="22" y="28" width="5" height="2" fill="#222"/><rect x="0.5" y="34.2" width="19" height="5.1" fill="url(#g5)"/><rect x="20" y="34.2" width="19.5" height="5.1" fill="#f6f0dc"/><rect x="21" y="35" width="17" height="3.3" fill="#1a1a1a" opacity="0.85"/></svg>
<div style="position:absolute;top:729.65px;font-size:14px;line-height:14px;color:#222;font-weight:400;white-space:nowrap;font-family:'Liberation Sans', sans-serif;left:585.00px;-webkit-text-stroke:0.15px currentColor;letter-spacing:-0.35px;">[NEW] TECNO SPARK G...</div>
<svg style="position:absolute;left:766px;top:729px;" width="14" height="14" viewBox="0 0 14 14"><path d="M1.7 4.6 V2.8 Q1.7 1.7 2.8 1.7 H4.6 M9.4 1.7 H11.2 Q12.3 1.7 12.3 2.8 V4.6 M12.3 9.4 V11.2 Q12.3 12.3 11.2 12.3 H9.4 M4.6 12.3 H2.8 Q1.7 12.3 1.7 11.2 V9.4" fill="none" stroke="#444" stroke-width="1.4"/><line x1="1" y1="7" x2="13" y2="7" stroke="#444" stroke-width="1.3"/></svg>
<div style="position:absolute;top:730.15px;font-size:14px;line-height:14px;color:#222;font-weight:400;white-space:nowrap;font-family:'Liberation Sans', sans-serif;right:1224.30px;letter-spacing:1.45px;margin-right:-1.45px;">93,07</div>
<div style="position:absolute;top:730.15px;font-size:14px;line-height:14px;color:#222;font-weight:400;white-space:nowrap;font-family:'Liberation Sans', sans-serif;right:1104.30px;letter-spacing:1.45px;margin-right:-1.45px;">0</div>
<div style="position:absolute;top:730.15px;font-size:14px;line-height:14px;color:#222;font-weight:400;white-space:nowrap;font-family:'Liberation Sans', sans-serif;right:964.30px;letter-spacing:1.45px;margin-right:-1.45px;">87,65</div>
<div style="position:absolute;top:730.15px;font-size:14px;line-height:14px;color:#222;font-weight:400;white-space:nowrap;font-family:'Liberation Sans', sans-serif;right:824.30px;letter-spacing:1.45px;margin-right:-1.45px;">99,75</div>
<div style="position:absolute;top:730.15px;font-size:14px;line-height:14px;color:#222;font-weight:400;white-space:nowrap;font-family:'Liberation Sans', sans-serif;right:684.30px;letter-spacing:1.45px;margin-right:-1.45px;"><span style="letter-spacing:0">Rp </span>1.099.000</div>
<div style="position:absolute;left:461px;top:414px;width:326px;height:107px;border:3px solid #d9302a;border-radius:3px;box-sizing:border-box;"></div>
<div style="position:absolute;left:1767px;top:49px;width:302px;height:323px;background:#fff;border-radius:7px;box-shadow:0 5px 10px -1px rgba(0,0,0,0.11), 0 0 3px rgba(0,0,0,0.05);"></div>
<svg style="position:absolute;left:2012px;top:44px;" width="14" height="6" viewBox="0 0 14 6"><path d="M0 6 L7 0 L14 6 Z" fill="#fff"/></svg>
<svg style="position:absolute;left:1896px;top:70px;" width="36" height="36" viewBox="0 0 36 36"><g transform="scale(1.0)"><circle cx="18" cy="18" r="18" fill="#0b0b0b"/><path d="M0 0 C -4.3 -6.824999999999999 -4.085 -19.5 0 -19.5 C 4.085 -19.5 4.3 -6.824999999999999 0 0 Z" fill="#e5141e" transform="translate(18 24.5) rotate(-11)"/><path d="M0 0 C -4.3 -6.824999999999999 -4.085 -19.5 0 -19.5 C 4.085 -19.5 4.3 -6.824999999999999 0 0 Z" fill="#e5141e" transform="translate(18 24.5) rotate(11)"/><path d="M0 0 C -4.3 -6.3 -4.085 -18 0 -18 C 4.085 -18 4.3 -6.3 0 0 Z" fill="#e5141e" transform="translate(18 24.5) rotate(-34)"/><path d="M0 0 C -4.3 -6.3 -4.085 -18 0 -18 C 4.085 -18 4.3 -6.3 0 0 Z" fill="#e5141e" transform="translate(18 24.5) rotate(34)"/><path d="M0 0 C -4.0 -5.425 -3.8 -15.5 0 -15.5 C 3.8 -15.5 4.0 -5.425 0 0 Z" fill="#e5141e" transform="translate(18 24.5) rotate(-57)"/><path d="M0 0 C -4.0 -5.425 -3.8 -15.5 0 -15.5 C 3.8 -15.5 4.0 -5.425 0 0 Z" fill="#e5141e" transform="translate(18 24.5) rotate(57)"/><path d="M0 0 C -3.6 -4.375 -3.42 -12.5 0 -12.5 C 3.42 -12.5 3.6 -4.375 0 0 Z" fill="#e5141e" transform="translate(18 24.5) rotate(-81)"/><path d="M0 0 C -3.6 -4.375 -3.42 -12.5 0 -12.5 C 3.42 -12.5 3.6 -4.375 0 0 Z" fill="#e5141e" transform="translate(18 24.5) rotate(81)"/><rect x="8" y="27.3" width="20" height="1.6" fill="#8a8a8a"/></g></svg>
<div style="position:absolute;top:117.27px;font-size:11.5px;line-height:11.5px;color:#222;font-weight:700;white-space:nowrap;font-family:'Liberation Sans', sans-serif;left:1918.50px;transform:translateX(-50%);">BUSSINE SLWV</div>
<div style="position:absolute;top:135.04px;font-size:12px;line-height:12px;color:#bdbdbd;font-weight:400;white-space:nowrap;font-family:'Liberation Sans', sans-serif;left:1918.50px;transform:translateX(-50%);">Shop Code: IDLCLMLHMV</div>
<div style="position:absolute;left:1893px;top:153px;width:43px;height:19px;background:#fff9f0;border-radius:2px;"></div>
<div style="position:absolute;top:157.04px;font-size:12px;line-height:12px;color:#e9952d;font-weight:700;white-space:nowrap;font-family:'Liberation Sans', sans-serif;left:1914.50px;transform:translateX(-50%);">Owner</div>
<div style="position:absolute;left:1767px;top:192px;width:299px;height:1px;background:#ececec;"></div>
<div style="position:absolute;left:1767px;top:251px;width:299px;height:1px;background:#ececec;"></div>
<div style="position:absolute;left:1767px;top:310px;width:299px;height:1px;background:#ececec;"></div>
<svg style="position:absolute;left:1788px;top:214px;" width="17" height="17" viewBox="0 0 17 17"><rect x="0.5" y="0.5" width="9" height="9" fill="#222"/><text x="5" y="8" text-anchor="middle" font-family="Liberation Sans" font-weight="700" font-size="8" fill="#fff">A</text><rect x="7.5" y="7.5" width="8.5" height="8.5" rx="1" fill="#fff" stroke="#222" stroke-width="1.2"/><text x="11.7" y="14.5" text-anchor="middle" font-family="Liberation Sans" font-size="7" fill="#222">文</text></svg>
<div style="position:absolute;top:215.15px;font-size:14px;line-height:14px;color:#555;font-weight:400;white-space:nowrap;font-family:'Liberation Sans', sans-serif;left:1812.50px;-webkit-text-stroke:0.2px currentColor;">US English</div>
<svg style="position:absolute;left:2035px;top:216px;" width="10" height="13" viewBox="0 0 10 13"><path d="M2 1.5 L7.5 6.5 L2 11.5" fill="none" stroke="#666" stroke-width="1.2"/></svg>
<svg style="position:absolute;left:1788px;top:273px;" width="17" height="17" viewBox="0 0 17 17"><circle cx="8" cy="8" r="7" fill="none" stroke="#333" stroke-width="1.3"/><path d="M2 6 Q6 5 6 9 Q6 12 9 15" fill="none" stroke="#333" stroke-width="1.2"/><path d="M10 1.5 Q9 5 12 6 L15 5.5" fill="none" stroke="#333" stroke-width="1.2"/><circle cx="12" cy="12" r="3.5" fill="#fff" stroke="#333" stroke-width="1.2"/></svg>
<div style="position:absolute;top:274.15px;font-size:14px;line-height:14px;color:#555;font-weight:400;white-space:nowrap;font-family:'Liberation Sans', sans-serif;left:1812.50px;-webkit-text-stroke:0.2px currentColor;letter-spacing:0.2px;">Time zone</div>
<div style="position:absolute;top:275.84px;font-size:12px;line-height:12px;color:#bbbbbb;font-weight:400;white-space:nowrap;font-family:'Liberation Sans', sans-serif;right:80.50px;">GMT+7 (Jakarta)</div>
<svg style="position:absolute;left:2035px;top:275px;" width="10" height="13" viewBox="0 0 10 13"><path d="M2 1.5 L7.5 6.5 L2 11.5" fill="none" stroke="#666" stroke-width="1.2"/></svg>
<svg style="position:absolute;left:1788px;top:333px;" width="16" height="15" viewBox="0 0 16 15"><path d="M6 1.5 H2 V13.5 H6" fill="none" stroke="#666" stroke-width="1.3"/><path d="M6 7.5 H14 M11 4.5 L14 7.5 L11 10.5" fill="none" stroke="#666" stroke-width="1.3"/></svg>
<div style="position:absolute;top:334.15px;font-size:14px;line-height:14px;color:#555;font-weight:400;white-space:nowrap;font-family:'Liberation Sans', sans-serif;left:1812.50px;-webkit-text-stroke:0.2px currentColor;letter-spacing:0.3px;">Log out</div>
</body></html>
